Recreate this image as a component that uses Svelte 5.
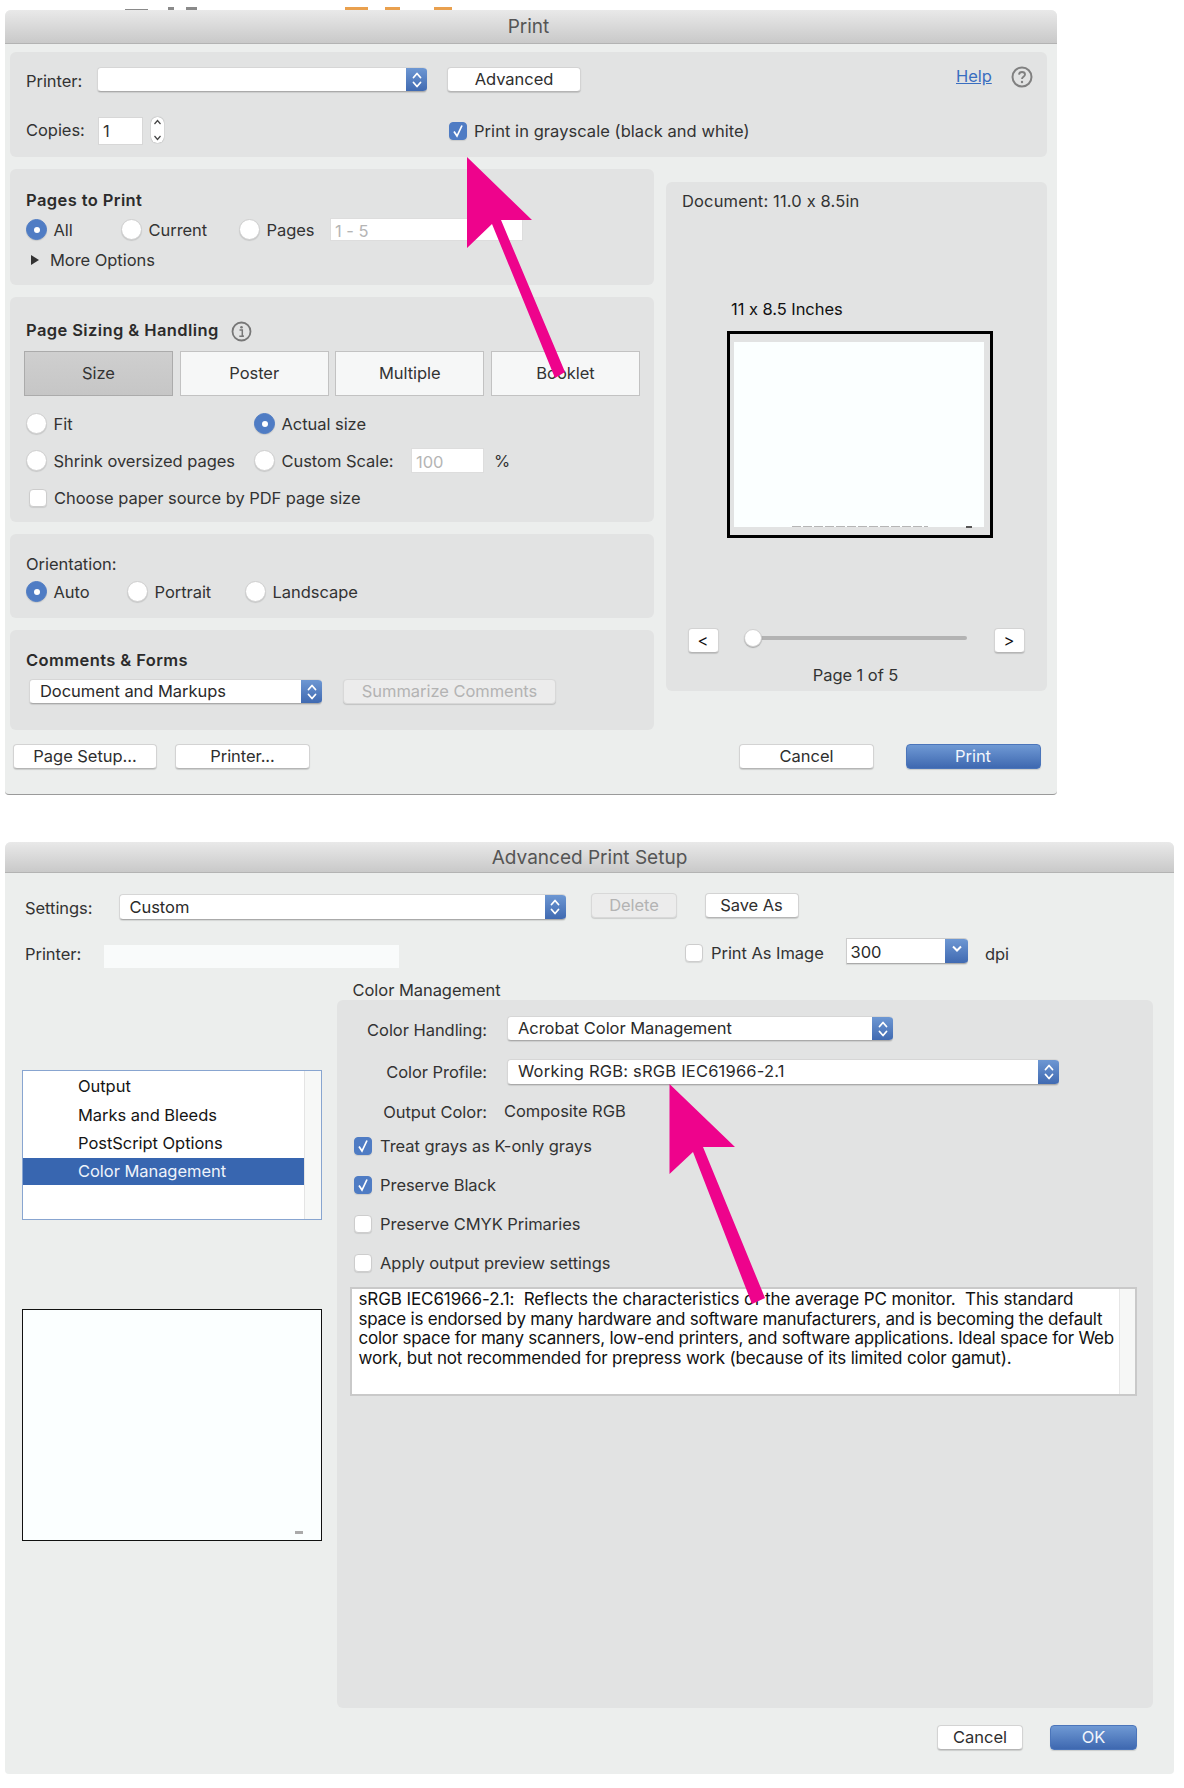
<script>
  const tabs = ['Size', 'Poster', 'Multiple', 'Booklet'];
  const listItems = ['Output', 'Marks and Bleeds', 'PostScript Options', 'Color Management'];
</script>

{#snippet updown()}
  <svg width="12" height="20" viewBox="0 0 12 20" fill="none" stroke="currentColor" stroke-width="1.8" stroke-linecap="round" stroke-linejoin="round"><path d="M2.5 7.5 6 3.5 9.5 7.5M2.5 12.5 6 16.5 9.5 12.5"/></svg>
{/snippet}

{#snippet radio(label, on)}
  <span class="opt"><span class="radio" class:on></span><span>{label}</span></span>
{/snippet}

{#snippet check(label, on)}
  <span class="opt"><span class="check" class:on>{#if on}<svg width="12" height="14" viewBox="0 0 12 14" fill="none" stroke="#fff" stroke-width="1.7"><path d="M2 7.5 5 12 10 1.5"/></svg>{/if}</span><span>{label}</span></span>
{/snippet}

<div class="page">
  <div class="behind">
    <i class="g a"></i><i class="g b"></i><i class="g c"></i>
    <i class="o d"></i><i class="o e"></i><i class="o f"></i>
  </div>

  <section class="win one">
    <header class="title t1">Print</header>

    <div class="panel top">
      <div class="row r1">
        <span class="lab w70">Printer:</span>
        <div class="select s-printer"><span class="val"></span><span class="arrows">{@render updown()}</span></div>
        <button class="btn advanced">Advanced</button>
        <a class="help" href="#help">Help</a>
        <svg class="ico" width="22" height="22" viewBox="0 0 22 22"><circle cx="11" cy="11" r="9.5" fill="none" stroke="#808080" stroke-width="2"/><path d="M8 8.6c.2-1.8 1.4-2.6 3-2.6 1.700 0 3 1 3 2.500 0 2.300-3 2.300-3 4.500" fill="none" stroke="#808080" stroke-width="1.900"/><circle cx="11" cy="16" r="1.200" fill="#808080"/></svg>
      </div>
      <div class="row r2">
        <span class="lab w71">Copies:</span>
        <div class="input copies">1</div>
        <div class="stepper"><svg width="13" height="26" viewBox="0 0 13 26" fill="none" stroke="#444" stroke-width="1.200"><path d="M3.500 7 6.500 3.500 9.500 7M3.500 19 6.500 22.500 9.500 19"/></svg></div>
        <span class="grayscale">{@render check('Print in grayscale (black and white)', true)}</span>
      </div>
    </div>

    <div class="cols">
      <div class="leftcol">
        <div class="panel pages">
          <h3>Pages to Print</h3>
          <div class="pgrid">
            {@render radio('All', true)}
            {@render radio('Current', false)}
            {@render radio('Pages', false)}
            <div class="input range">1 - 5</div>
          </div>
          <div class="more"><span class="tri"></span>More Options</div>
        </div>

        <div class="panel sizing">
          <div class="shead">
            <h3>Page Sizing &amp; Handling</h3>
            <svg width="21" height="21" viewBox="0 0 21 21"><circle cx="10.500" cy="10.500" r="9" fill="none" stroke="#777" stroke-width="1.800"/><circle cx="10.500" cy="6.200" r="1.300" fill="#777"/><path d="M8.500 9h2.800v6h1.500M8.300 15.300h4.600" fill="none" stroke="#777" stroke-width="1.500"/></svg>
          </div>
          <div class="tabs">
            {#each tabs as t, i}
              <div class="tab" class:sel={i === 0}>{t}</div>
            {/each}
          </div>
          <div class="sgrid">
            {@render radio('Fit', false)}
            {@render radio('Actual size', true)}
            {@render radio('Shrink oversized pages', false)}
            <div class="scale">
              <span class="scaleopt">{@render radio('Custom Scale:', false)}</span>
              <div class="input pct">100</div>
              <span class="lab">%</span>
            </div>
          </div>
          <div class="source">{@render check('Choose paper source by PDF page size', false)}</div>
        </div>

        <div class="panel orient">
          <div class="lab olabel">Orientation:</div>
          <div class="ogrid">
            {@render radio('Auto', true)}
            {@render radio('Portrait', false)}
            {@render radio('Landscape', false)}
          </div>
        </div>

        <div class="panel forms">
          <h3>Comments &amp; Forms</h3>
          <div class="frow">
            <div class="select s-doc"><span class="val">Document and Markups</span><span class="arrows">{@render updown()}</span></div>
            <button class="btn dis summarize">Summarize Comments</button>
          </div>
        </div>
      </div>

      <div class="panel preview">
        <div class="lab docsize">Document: 11.0 x 8.5in</div>
        <div class="inches">11 x 8.5 Inches</div>
        <div class="frame">
          <div class="sheet"><i class="foot"></i><i class="mark"></i></div>
        </div>
        <div class="pager">
          <button class="btn nav">&lt;</button>
          <div class="slider"><span class="thumb"></span></div>
          <button class="btn nav">&gt;</button>
        </div>
        <div class="lab pageof">Page 1 of 5</div>
      </div>
    </div>

    <div class="actions">
      <button class="btn setup">Page Setup...</button>
      <button class="btn printerbtn">Printer...</button>
      <button class="btn cancel">Cancel</button>
      <button class="btn primary printbtn">Print</button>
    </div>
  </section>

  <section class="win two">
    <header class="title t2">Advanced Print Setup</header>

    <div class="row settings">
      <span class="lab w94">Settings:</span>
      <div class="select s-custom"><span class="val">Custom</span><span class="arrows">{@render updown()}</span></div>
      <button class="btn dis delete">Delete</button>
      <button class="btn saveas">Save As</button>
    </div>

    <div class="row prow">
      <span class="lab plab">Printer:</span>
      <div class="pname"></div>
      <span class="pimg">{@render check('Print As Image', false)}</span>
      <div class="select s-dpi"><span class="val">300</span><span class="arrows down"><svg width="12" height="10" viewBox="0 0 12 10" fill="none" stroke="#fff" stroke-width="2"><path d="M2 2.500 6 6.500 10 2.500"/></svg></span></div>
      <span class="lab dpi">dpi</span>
    </div>

    <div class="main">
      <div class="side">
        <div class="list">
          <div class="items">
            {#each listItems as item, i}
              <div class="item" class:active={i === 3}>{item}</div>
            {/each}
          </div>
          <div class="bar"></div>
        </div>
        <div class="thumbnail"><i></i></div>
      </div>

      <div class="content">
        <div class="lab cmhead">Color Management</div>
        <div class="panel cm">
          <div class="cmgrid">
            <span class="lab rt">Color Handling:</span>
            <div class="select s-handling"><span class="val">Acrobat Color Management</span><span class="arrows">{@render updown()}</span></div>
            <span class="lab rt">Color Profile:</span>
            <div class="select s-profile"><span class="val">Working RGB: sRGB IEC61966-2.1</span><span class="arrows">{@render updown()}</span></div>
            <span class="lab rt">Output Color:</span>
            <span class="lab composite">Composite RGB</span>
          </div>
          <div class="checks">
            {@render check('Treat grays as K-only grays', true)}
            {@render check('Preserve Black', true)}
            {@render check('Preserve CMYK Primaries', false)}
            {@render check('Apply output preview settings', false)}
          </div>
          <div class="descr">
            <p>
              <span class="l1">sRGB IEC61966-2.1:&nbsp; Reflects the characteristics of the average PC monitor.&nbsp; This standard</span>
              <span class="l2">space is endorsed by many hardware and software manufacturers, and is becoming the default</span>
              <span class="l3">color space for many scanners, low-end printers, and software applications. Ideal space for Web</span>
              <span class="l4">work, but not recommended for prepress work (because of its limited color gamut).</span>
            </p>
            <div class="descbar"></div>
          </div>
        </div>
      </div>
    </div>

    <div class="actions2">
      <button class="btn c2">Cancel</button>
      <button class="btn primary ok">OK</button>
    </div>
  </section>

  <svg class="arrows-overlay" width="1184" height="1788" viewBox="0 0 1184 1788" fill="#ee038c">
    <path d="M467 157 532 220 501 220 565 372 555 378 492 224 467 248Z"/>
    <path d="M669.500 1084 735 1147 703 1147 765 1298 752 1304 693 1152 669.500 1174Z"/>
  </svg>
</div>

<style>
  :global(body) { margin: 0; background: #fff; }
  .page {
    position: relative;
    width: 1184px;
    height: 1788px;
    overflow: hidden;
    background: #fff;
    font: 16.500px/20px Inter, "Noto Sans", sans-serif;
    letter-spacing: -0.05px;
    color: #333;
  }
  .behind { position: absolute; inset: 0 0 auto 0; height: 10px; }
  .behind i { position: absolute; display: block; height: 3px; top: 7px; }
  .g { background: #8a8a8a; }
  .o { background: #e9a04e; }
  .a { left: 125px; width: 23px; top: 9px !important; height: 1px !important; }
  .b { left: 168px; width: 6px; }
  .c { left: 186px; width: 11px; }
  .d { left: 345px; width: 23px; }
  .e { left: 385px; width: 15px; }
  .f { left: 434px; width: 18px; }

  .arrows-overlay { position: absolute; left: 0; top: 0; pointer-events: none; }

  .win {
    position: relative;
    margin-left: 5px;
    background: #eceeed;
    box-sizing: border-box;
    border-radius: 6px 6px 4px 4px;
  }
  .one { top: 10px; width: 1052px; height: 785px; padding: 0 10px 0 5px; border-bottom: 1px solid #9a9a9a; }
  .two { top: 57px; width: 1169px; height: 932px; padding: 0 21px 0 20px; }

  .title {
    height: 34px;
    margin: 0 -10px 0 -5px;
    box-sizing: border-box;
    border-bottom: 1px solid #b3b3b3;
    border-radius: 6px 6px 0 0;
    background: linear-gradient(#e9e9e9, #c9c9c9);
    text-align: center;
    font-size: 19px;
    line-height: 34px;
    letter-spacing: 0;
    color: #555;
  }
  .t1 { padding-right: 5px; }
  .t2 { height: 31px; margin: 0 -21px 0 -20px; line-height: 32px; }

  .panel { background: #e2e3e3; border-radius: 6px; box-sizing: border-box; }
  .row { display: flex; align-items: center; }
  .lab { color: #333; white-space: nowrap; }
  .w70 { width: 71px; padding-top: 3px; box-sizing: border-box; }
  .w71 { width: 72px; padding-bottom: 2px; box-sizing: border-box; }
  .w94 { width: 93.500px; padding-top: 5px; box-sizing: border-box; }

  h3 { margin: 0; font: 600 16.500px/20px Inter, sans-serif; letter-spacing: 0.4px; color: #2b2b2b; white-space: nowrap; }

  .btn {
    display: block;
    margin: 0;
    padding: 0;
    height: 25px;
    box-sizing: border-box;
    background: #fff;
    border: 1px solid #d3d3d3;
    border-bottom-color: #b5b5b5;
    border-radius: 4px;
    box-shadow: 0 1px 1px rgba(0, 0, 0, 0.14);
    font: 16.500px/23px Inter, sans-serif;
    letter-spacing: -0.05px;
    color: #2e2e2e;
    text-align: center;
  }
  .dis { background: #ececec; color: #b3b3b3; border-color: #d8d8d8; }
  .primary {
    background: linear-gradient(#6f99d4, #3e68b0);
    border: 1px solid #4b75ba;
    color: #f2f6fc;
  }

  .select {
    display: flex;
    height: 25px;
    box-sizing: border-box;
    background: #fff;
    border: 1px solid #d6d6d6;
    border-bottom-color: #aaa;
    border-right: 0;
    border-radius: 4px;
    box-shadow: 0 1px 1px rgba(0, 0, 0, 0.1);
    overflow: hidden;
  }
  .val { flex: 1; padding-left: 10px; line-height: 23px; color: #2a2a2a; white-space: nowrap; }
  .arrows {
    flex: none;
    width: 21px;
    margin: -1px 0;
    display: flex;
    align-items: center;
    justify-content: center;
    color: #fff;
    background: linear-gradient(#6f99d4, #3e68b0);
  }

  .input {
    box-sizing: border-box;
    background: #fff;
    border: 1px solid #d7d7d7;
    line-height: 26px;
  }

  .opt { display: inline-flex; align-items: center; white-space: nowrap; color: #333; }
  .radio {
    flex: none;
    box-sizing: border-box;
    width: 21px;
    height: 21px;
    margin-right: 6.500px;
    border-radius: 50%;
    background: #fff;
    border: 1px solid #cfcfcf;
    box-shadow: 0 1px 1px rgba(0, 0, 0, 0.12);
    display: flex;
    align-items: center;
    justify-content: center;
  }
  .radio.on { background: #4f7cc4; border-color: #4f7cc4; }
  .radio.on::after { content: ""; width: 6px; height: 6px; border-radius: 50%; background: #fff; }
  .check {
    flex: none;
    box-sizing: border-box;
    width: 18px;
    height: 18px;
    margin-right: 8px;
    border-radius: 4px;
    background: #fff;
    border: 1px solid #cdcdcd;
    box-shadow: 0 1px 1px rgba(0, 0, 0, 0.1);
    display: flex;
    align-items: center;
    justify-content: center;
  }
  .check.on { background: #4f7cc4; border-color: #4f7cc4; }

  /* window one: top panel */
  .top { margin-top: 8px; height: 105px; padding: 15px 10px 0 16px; }
  .r1 { height: 25px; }
  .s-printer { width: 330px; }
  .advanced { width: 134px; margin-left: 20px; }
  .help { margin-left: 375px; color: #3a6ec0; text-decoration: underline; position: relative; top: -4px; }
  .ico { flex: none; margin-left: 19px; position: relative; top: -3px; }
  .r2 { height: 28px; margin-top: 25px; }
  .copies { width: 45px; height: 28px; padding-left: 4px; }
  .stepper {
    width: 13px;
    height: 26px;
    margin-left: 8px;
    background: #fff;
    border-radius: 6px;
    box-shadow: 0 0 1px rgba(0, 0, 0, 0.5);
    align-self: flex-start;
  }
  .grayscale { margin-left: 285px; letter-spacing: 0.05px; }
  .grayscale .check { margin-right: 7px; }

  .cols { display: grid; grid-template-columns: 644px 381px; column-gap: 12px; margin-top: 12px; align-items: start; }
  .leftcol { display: flex; flex-direction: column; gap: 12px; }

  .pages { height: 116px; padding: 21px 0 0 16px; }
  .pgrid { display: grid; grid-template-columns: 95px 118px 91px 193px; align-items: center; margin-top: 8px; height: 23px; }
  .range { height: 23px; line-height: 25px; padding-left: 4px; color: #b5b5b5; border-color: #ddd; }
  .more { display: flex; align-items: center; margin: 9px 0 0 5px; height: 20px; }
  .tri { width: 0; height: 0; border-left: 8px solid #333; border-top: 5.500px solid transparent; border-bottom: 5.500px solid transparent; margin-right: 11px; }

  .sizing { height: 225px; padding: 23px 0 0 16px; }
  .shead { display: flex; align-items: center; gap: 12px; height: 20px; }
  .shead svg { position: relative; top: 1px; }
  .tabs { display: grid; grid-template-columns: repeat(4, 149px); column-gap: 6.670px; margin: 11px 0 0 -2px; }
  .tab {
    height: 45px;
    box-sizing: border-box;
    background: #f6f7f7;
    border: 1.500px solid #c2c2c2;
    text-align: center;
    line-height: 43px;
    color: #333;
  }
  .tab.sel { background: linear-gradient(#cfcfcf, #c6c6c6); border-color: #ababab; }
  .sgrid { display: grid; grid-template-columns: 228px 1fr; row-gap: 14px; margin-top: 17px; align-items: center; }
  .scale { display: flex; align-items: center; height: 25px; }
  .scaleopt { display: flex; width: 157px; }
  .pct { width: 73px; height: 25px; padding-left: 4px; color: #b5b5b5; border-color: #ddd; }
  .scale .lab { margin-left: 10px; }
  .source { display: flex; margin: 15px 0 0 3px; }
  .source .check { margin-right: 7px; }

  .orient { height: 84px; padding: 20px 0 0 16px; }
  .ogrid { display: grid; grid-template-columns: 101px 118px auto; justify-content: start; margin-top: 7px; }

  .forms { height: 100px; padding: 20px 0 0 16px; }
  .frow { display: flex; margin: 9px 0 0 3px; }
  .s-doc { width: 293px; }
  .summarize { width: 213px; margin-left: 21px; }

  .preview { height: 509px; margin-top: 13px; padding: 9px 0 0 16px; }
  .docsize { letter-spacing: 0.15px; }
  .inches { margin: 88px 0 0 49px; color: #111; white-space: nowrap; }
  .frame {
    width: 266px;
    height: 207px;
    margin: 12px 0 0 45px;
    box-sizing: border-box;
    border: 3px solid #000;
    padding: 8px 6px 8px 4px;
    background: #e2e3e3;
  }
  .sheet { position: relative; height: 100%; background: #fbffff; }
  .foot {
    position: absolute;
    left: 58px;
    bottom: 0;
    width: 136px;
    height: 1px;
    background: repeating-linear-gradient(90deg, #b5b5b5 0 9px, transparent 9px 11px);
  }
  .mark { position: absolute; right: 12px; bottom: -1px; width: 6px; height: 2px; background: #555; }
  .pager { display: flex; align-items: flex-start; margin: 90px 0 0 5.500px; }
  .nav { width: 31px; height: 25px; line-height: 23px; color: #111; }
  .slider { position: relative; width: 223px; height: 4px; margin: 8px 27px 0 25px; background: #b3b3b3; border-radius: 2px; }
  .thumb {
    position: absolute;
    left: 0;
    top: -7px;
    width: 18px;
    height: 18px;
    box-sizing: border-box;
    background: #fff;
    border: 1px solid #d0d0d0;
    border-radius: 50%;
    box-shadow: 0 1px 1px rgba(0, 0, 0, 0.25);
  }
  .pageof { margin: 12px 0 0 -18px; text-align: center; }

  .actions { display: flex; margin: 14px 0 0 3px; }
  .setup { width: 144px; }
  .printerbtn { width: 135px; margin-left: 18px; }
  .cancel { width: 135px; margin-left: 429px; }
  .printbtn { width: 135px; margin-left: 31.500px; }

  /* window two */
  .settings { margin-top: 20px; height: 27px; align-items: flex-start; }
  .s-custom { width: 447px; height: 26px; margin-top: 1px; }
  .s-custom .val { line-height: 25px; }
  .delete { width: 86px; margin-left: 25.500px; }
  .saveas { width: 94px; margin-left: 27.500px; }

  .prow { margin-top: 18px; height: 30px; align-items: flex-start; }
  .plab { width: 79px; margin-top: 6px; }
  .pname { width: 295px; height: 23px; margin-top: 7px; background: #f9fbfb; }
  .pimg { margin: 6px 0 0 286px; width: 160.500px; height: 18px; display: flex; }
  .s-dpi { width: 122.500px; height: 26px; border-radius: 0 4px 4px 0; border-left: 1px solid #ccc; border-top: 1px solid #ccc; }
  .s-dpi .val { padding-left: 4px; line-height: 26px; }
  .down { width: 23px; align-items: flex-start; padding-top: 6px; box-sizing: border-box; }
  .dpi { margin: 6px 0 0 17px; }

  .main { display: grid; grid-template-columns: 300px 816px; column-gap: 14.500px; margin: 12px 0 0 -3px; }
  .list {
    display: flex;
    height: 150px;
    margin-top: 90px;
    box-sizing: border-box;
    background: #fff;
    border: 1px solid #88a5d0;
  }
  .items { flex: 1; padding-top: 1px; }
  .item { height: 28.500px; padding-left: 55px; line-height: 29px; color: #151515; }
  .item.active { height: 27px; background: #3866b0; color: #eef3fb; line-height: 27px; }
  .bar { width: 16px; background: #f7f8f7; border-left: 1px solid #e4e4e4; }
  .thumbnail {
    position: relative;
    height: 232px;
    margin-top: 89px;
    box-sizing: border-box;
    background: #fbffff;
    border: 1.500px solid #111;
  }
  .thumbnail i { position: absolute; right: 18px; bottom: 6px; width: 8px; height: 3px; background: #aaa; }

  .cmhead { margin-left: 16px; }
  .cm { height: 708px; padding: 16px 0 0 0; }
  .cmgrid { display: grid; grid-template-columns: 150.500px 1fr; column-gap: 20px; align-items: center; }
  .rt { justify-self: end; padding-top: 2px; }
  .s-handling { width: 386px; grid-column: 2; }
  .s-profile { width: 552px; height: 26px; margin: 18px 0 15px; grid-column: 2; }
  .s-profile .val { letter-spacing: 0.2px; }
  .composite { margin-left: -3px; }
  .checks { display: grid; row-gap: 19px; margin: 13.500px 0 0 17.500px; }
  .descr {
    display: flex;
    width: 787.500px;
    height: 109px;
    margin: 14.500px 0 0 13px;
    box-sizing: border-box;
    background: #fff;
    border: 2px solid #c9c9c9;
  }
  .descr p {
    flex: 1;
    min-width: 0;
    margin: 0;
    padding: 1px 0 0 7px;
    font-size: 17px;
    line-height: 19.500px;
    color: #111;
    white-space: nowrap;
  }
  .descr span { display: block; }
  .l1 { letter-spacing: -0.1px; }
  .l2 { letter-spacing: -0.24px; }
  .l3 { letter-spacing: -0.23px; }
  .l4 { letter-spacing: -0.19px; }
  .descbar { flex: none; width: 15px; background: #f6f7f6; border-left: 1px solid #e6e6e6; }

  .actions2 { display: flex; justify-content: flex-end; gap: 27px; margin: 17px 16px 0 0; }
  .c2 { width: 86px; }
  .ok { width: 87px; }
</style>
